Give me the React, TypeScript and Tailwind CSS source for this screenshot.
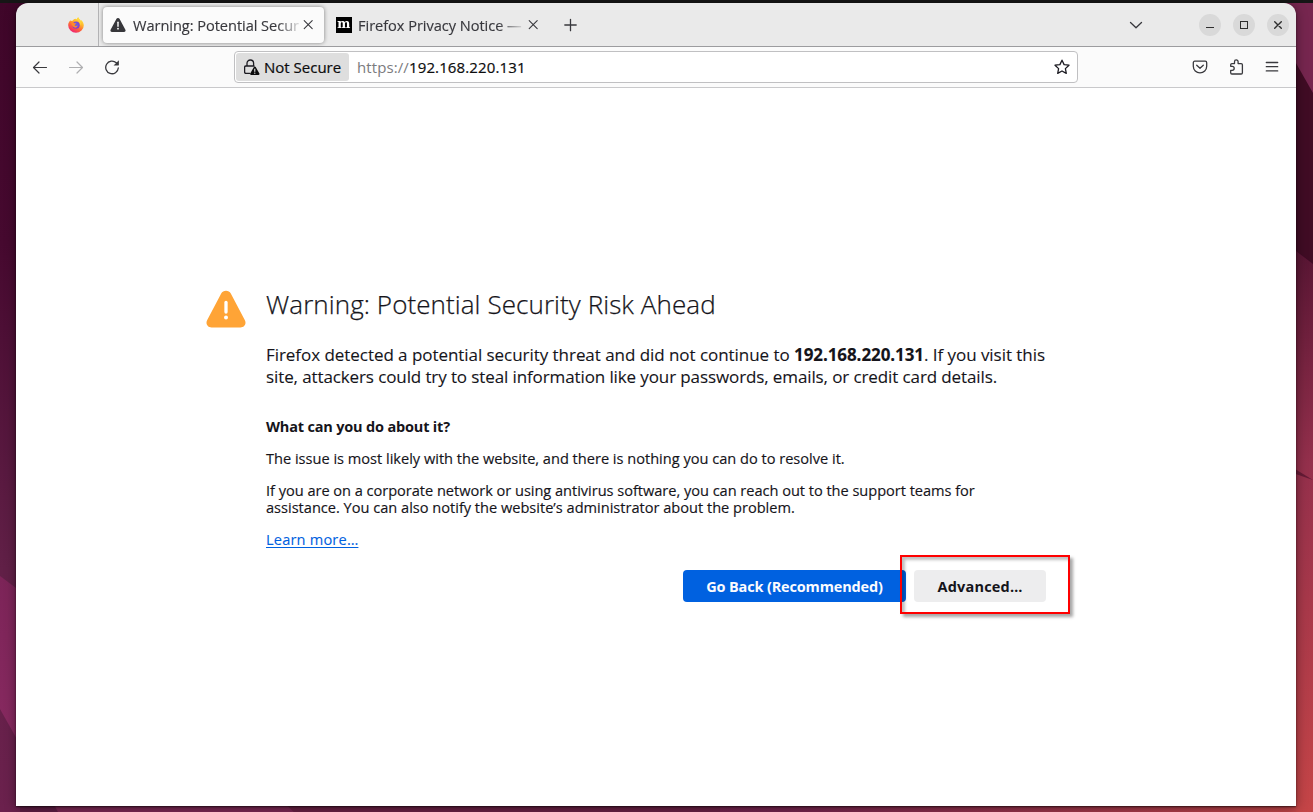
import type { ReactNode } from "react";

type IconProps = { className?: string };

function Wallpaper() {
  return (
    <svg className="absolute inset-0 h-full w-full" viewBox="0 0 1313 812" preserveAspectRatio="none">
      <defs>
        <linearGradient id="leftWall" x1="0" y1="0" x2="0" y2="1">
          <stop offset="0" stopColor="#3f0629" />
          <stop offset="0.3" stopColor="#46092f" />
          <stop offset="0.7" stopColor="#612047" />
          <stop offset="1" stopColor="#6b214d" />
        </linearGradient>
        <linearGradient id="facet" x1="0" y1="0" x2="0" y2="1">
          <stop offset="0" stopColor="#7c2458" />
          <stop offset="1" stopColor="#8a2b62" />
        </linearGradient>
        <linearGradient id="rightWall" x1="0" y1="0" x2="0" y2="1">
          <stop offset="0" stopColor="#521331" />
          <stop offset="0.4" stopColor="#94304c" />
          <stop offset="1" stopColor="#c54547" />
        </linearGradient>
        <linearGradient id="bottomWall" x1="0" y1="0" x2="1" y2="0">
          <stop offset="0" stopColor="#6b2149" />
          <stop offset="0.6" stopColor="#74244d" />
          <stop offset="1" stopColor="#c04447" />
        </linearGradient>
      </defs>
      <rect width="656" height="812" fill="url(#leftWall)" />
      <polygon points="0,576 40,606 40,780 0,709" fill="url(#facet)" />
      <rect x="656" width="657" height="250" fill="#76264f" />
      <polygon points="1260,0 1313,93 1313,264 1270,230" fill="#400c24" />
      <polygon points="1270,231 1313,264 1313,812 1270,812" fill="url(#rightWall)" />
      <polygon points="1290,466 1313,480 1290,472" fill="#661b36" />
      <rect y="795" x="20" width="1276" height="17" fill="url(#bottomWall)" />
      <polygon points="20,795 48,795 58,812 20,812" fill="#5e1d43" />
      <polygon points="58,812 50,795 276,795 294,812" fill="#7b2753" />
      <polygon points="294,812 276,795 720,795 720,812" fill="#65203f" fillOpacity=".7" />
    </svg>
  );
}

function FirefoxLogo() {
  return (
    <svg className="h-4 w-4" viewBox="0 0 16 16">
      <defs>
        <linearGradient id="fox" x1=".85" y1=".05" x2=".3" y2="1">
          <stop offset="0" stopColor="#fff14a" />
          <stop offset=".35" stopColor="#ffb52c" />
          <stop offset=".62" stopColor="#ff6a36" />
          <stop offset="1" stopColor="#ee1d76" />
        </linearGradient>
        <radialGradient id="globe" cx=".5" cy=".4" r=".6">
          <stop offset="0" stopColor="#5b68e8" />
          <stop offset="1" stopColor="#8c35cf" />
        </radialGradient>
      </defs>
      <path
        d="M2.2 3.2 3 4.1c.5-.3 1-.4 1.6-.4C5.5 2.5 6.4 2 7.2 1.8L9 2.3C9 1.4 9.7.5 10.3.2c.3 1.5 1.8 2 2.6 3.6l.4-.9c1.5 1.6 2.5 3.4 2.5 5.3A7.8 7.6 0 0 1 8 15.8 7.8 7.6 0 0 1 .2 8.2C.2 6.3 1 4.8 1.8 4z"
        fill="url(#fox)"
      />
      <circle cx="8.1" cy="8.2" r="3.6" fill="url(#globe)" />
      <path d="M3.3 6.1c1-.8 2-.6 3-.1.7.3 1.8.1 2 .5 0 .8-1.5.9-1.7 1.7.4 1 2.1.8 3.1.1-.2 1.9-1.7 2.6-3.2 2.3C4.7 10 3.5 8.3 3.3 6.1z" fill="#ff8a2b" />
      <path d="M8.6 2.3c1.6.7 3.7 2.7 3.5 6.1 1-1.4.8-3.5-.1-5L10.3.6C9.500 1 8.900 1.600 8.600 2.300z" fill="#ffd83b" />
    </svg>
  );
}

function TabWarning() {
  return (
    <svg className="h-4 w-4 shrink-0" viewBox="0 0 16 16">
      <path d="M8 .9c.7 0 1.200.3 1.500.9l5.900 10.900c.6 1.100-.1 2.200-1.400 2.200H2c-1.300 0-2-1.100-1.400-2.200L6.500 1.800c.3-.6.8-.9 1.500-.9z" fill="#37373b" />
      <path d="M8 5.300v4" stroke="#fff" strokeWidth="1.400" strokeLinecap="round" />
      <circle cx="8" cy="11.700" r=".9" fill="#fff" />
    </svg>
  );
}

function Line({ d, className = "", w = 1.3, size = "h-4 w-4" }: { d: string; w?: number; size?: string } & IconProps) {
  return (
    <svg
      className={`${size} shrink-0 ${className}`}
      viewBox="0 0 16 16"
      fill="none"
      stroke="currentColor"
      strokeWidth={w}
      strokeLinecap="round"
      strokeLinejoin="round"
    >
      <path d={d} />
    </svg>
  );
}

function LockWarning() {
  return (
    <svg className="h-4 w-4 shrink-0" viewBox="0 0 16 16">
      <path
        d="M3 7V4.300a3.300 3.300 0 0 1 6.600 0V7M5.700 14.400H1.900c-.8 0-1.300-.5-1.300-1.300V8.300c0-.8.5-1.300 1.300-1.300h8.200"
        fill="none"
        stroke="#1c1b22"
        strokeWidth="1.300"
        strokeLinecap="round"
      />
      <path d="M10.800 7.400c.4 0 .7.200.9.500l3.700 6.600c.4.700 0 1.400-.8 1.400H7c-.8 0-1.200-.7-.8-1.400l3.700-6.600c.2-.3.500-.5.900-.5z" fill="#0c0c0d" />
      <path d="M10.800 10.100v2.300" stroke="#fff" strokeWidth="1" strokeLinecap="round" />
      <circle cx="10.800" cy="14.200" r=".6" fill="#fff" />
    </svg>
  );
}

function Reload() {
  return (
    <svg className="h-4 w-4 text-[#39393d]" viewBox="0 0 16 16" fill="none">
      <path d="M14.300 9a6.300 6.300 0 1 1-2-5.200l1.200 1.200" stroke="currentColor" strokeWidth="1.300" strokeLinecap="round" />
      <path d="M14.900 1.300v4.800c0 .3-.2.500-.5.500H9.600z" fill="currentColor" />
    </svg>
  );
}

function AlertTriangle() {
  return (
    <svg className="mt-[2px] h-[38px] w-10 shrink-0" viewBox="0 0 40 38">
      <path d="M20 .7c2.100 0 3.800 1 4.800 2.800l14.100 26.800c1.800 3.500-.6 7.100-4.400 7.100H5.500c-3.800 0-6.200-3.600-4.400-7.100L15.200 3.500c1-1.800 2.700-2.800 4.800-2.800z" fill="#ffa436" />
      <path d="M20 12.500v9.500" stroke="#fff" strokeWidth="3.300" strokeLinecap="round" />
      <circle cx="20" cy="27.500" r="2" fill="#fff" />
    </svg>
  );
}

function WindowButton({ children }: { children: ReactNode }) {
  return (
    <div className="flex h-[22px] w-[22px] items-center justify-center rounded-full bg-[#d9d9d9] text-[#2e2e2e]">
      {children}
    </div>
  );
}

const CROSS = "M4.200 3.700l8 8M12.200 3.700l-8 8";

function TabStrip() {
  return (
    <header className="flex h-[44px] border-b border-[#9c9c9f] bg-[#eaeaea] text-[14.600px] leading-5 text-[#38383d]">
      <div className="flex w-[83px] justify-end border-r border-[#b3b3b5] pt-[14px] pr-[14px]">
        <FirefoxLogo />
      </div>
      <div className="mt-[4px] ml-[4px] flex h-[36px] w-[221px] items-center rounded-[4px] bg-[#fbfbfb] pl-[7px] shadow-[0_0_4px_rgba(0,0,0,0.45)]">
        <TabWarning />
        <span className="ml-[7px] w-[166px] overflow-hidden tracking-[-0.050px] whitespace-nowrap [-webkit-text-stroke:0.150px] [mask-image:linear-gradient(to_right,#000_144px,transparent_170px)]">
          Warning: Potential Security Risk Ahead
        </span>
        <Line d={CROSS} w={1.100} className="ml-[1px]" />
      </div>
      <div className="ml-[12px] flex h-[44px] items-center">
        <div className="flex h-4 w-4 items-center justify-center bg-black font-['DejaVu_Serif'] text-[13px] leading-4 font-bold text-white">
          <span className="-mt-[3px] inline-block scale-x-[0.950]">m</span>
        </div>
        <span className="ml-[6px] w-[167px] overflow-hidden tracking-[-0.040px] whitespace-nowrap [-webkit-text-stroke:0.150px] [mask-image:linear-gradient(to_right,#000_140px,transparent_168px)]">
          Firefox Privacy Notice — Mozilla
        </span>
        <Line d={CROSS} w={1.100} />
        <Line d="M7.500 2.300v11.400M1.800 8h11.400" w={1.300} className="ml-[22px]" />
      </div>
      <div className="mr-[7px] ml-auto flex h-[44px] items-center gap-3">
        <Line d="M2.500 5.500 8 10.700l5.500-5.200" w={1.300} className="mr-[43px]" />
        <WindowButton>
          <svg className="h-4 w-4" viewBox="0 0 16 16">
            <rect x="4" y="10" width="8" height="1" fill="currentColor" />
          </svg>
        </WindowButton>
        <WindowButton>
          <svg className="h-4 w-4" viewBox="0 0 16 16">
            <rect x="4.500" y="4.500" width="7" height="7" fill="none" stroke="currentColor" />
          </svg>
        </WindowButton>
        <WindowButton>
          <Line d="M4.700 4.700l6.600 6.600M11.300 4.700l-6.600 6.600" w={1.400} />
        </WindowButton>
      </div>
    </header>
  );
}

function Toolbar() {
  return (
    <nav className="flex h-[41px] items-center border-b border-[#c9c9cb] bg-[#fbfbfb] pl-4 text-[15px] text-[#39393d]">
      <div className="flex gap-5">
        <Line d="M14.500 8.500H1.500M7 3 1.500 8.500 7 14" w={1.200} />
        <Line d="M1.500 8.500h13M9 3l5.500 5.500L9 14" w={1.200} className="text-[#afafb1]" />
        <Reload />
      </div>
      <div className="ml-[114px] flex h-8 w-[844px] items-center rounded-[4px] border border-[#c0c0c2] bg-white pl-px">
        <div className="flex h-7 w-[113px] items-center rounded-[3px] bg-[#dedede] pl-2 text-[#0c0c0d]">
          <LockWarning />
          <span className="ml-[4px] whitespace-nowrap [-webkit-text-stroke:0.200px]">Not Secure</span>
        </div>
        <span className="ml-[8px] tracking-[0.100px] whitespace-nowrap text-[#7b7b7e]">
          https://<span className="tracking-[0.130px] text-[#0c0c0d] [-webkit-text-stroke:0.200px]">192.168.220.131</span>
        </span>
        <Line
          d="M8 1.200l2.100 4.400 4.900.6-3.600 3.400.9 4.800L8 12l-4.300 2.400.9-4.800L1 6.200l4.900-.6z"
          w={1.300}
          className="mr-[7px] ml-auto text-[#1c1b22]"
        />
      </div>
      <div className="mr-4 ml-auto flex gap-5">
        <Line d="M2.800 2.200h10.400c.9 0 1.500.6 1.500 1.500v3.500a6.700 6.700 0 0 1-13.400 0V3.700c0-.9.6-1.500 1.500-1.500zM4.700 6.300 8 9.300l3.300-3" w={1.300} />
        <Line d="M2.700 7.300V5.800c0-.7.500-1.200 1.200-1.200H6.500V2.700a1.800 1.800 0 0 1 3.600 0v1.900h3.100c.7 0 1.200.5 1.200 1.200v8c0 .7-.5 1.200-1.200 1.200H3.900c-.7 0-1.200-.5-1.200-1.200v-2.500h1.500a2 2 0 0 0 0-4z" w={1.300} />
        <Line d="M2.300 3.500h11.400M2.300 7.700h11.400M2.300 11.900h11.400" w={1.300} />
      </div>
    </nav>
  );
}

function WarningPage() {
  return (
    <main className="flex-1 bg-white pt-[200px] pl-[190px] text-[#15141a]">
      <div className="flex gap-5">
        <AlertTriangle />
        <section className="w-[780px]">
          <h1 className="text-[26px] leading-8 font-light tracking-[0.080px] [-webkit-text-stroke:0.250px]">
            Warning: Potential Security Risk Ahead
          </h1>
          <p className="mt-6 text-[17px] leading-[22px] whitespace-nowrap [-webkit-text-stroke:0.100px]">
            <span className="tracking-[-0.048px]">Firefox detected a potential security threat and did not continue to </span>
            <b className="tracking-[-0.080px]">192.168.220.131</b>
            <span className="tracking-[-0.050px]">. If you visit this</span>
            <br />
            <span className="tracking-[-0.109px]">
              site, attackers could try to steal information like your passwords, emails, or credit card details.
            </span>
          </p>
          <div className="mt-[30px] flex flex-col gap-[15px] text-[14.600px] leading-[17px] whitespace-nowrap">
            <h2 className="text-[14.500px] font-bold tracking-[-0.180px]">What can you do about it?</h2>
            <p className="tracking-[-0.010px] [-webkit-text-stroke:0.150px]">
              The issue is most likely with the website, and there is nothing you can do to resolve it.
            </p>
            <p className="[-webkit-text-stroke:0.150px]">
              <span className="tracking-[-0.033px]">
                If you are on a corporate network or using antivirus software, you can reach out to the support teams for
              </span>
              <br />
              <span className="tracking-[-0.010px]">
                assistance. You can also notify the website’s administrator about the problem.
              </span>
            </p>
            <a className="self-start tracking-[0.180px] text-[#0061e0] underline decoration-1 underline-offset-2 [-webkit-text-stroke:0.100px]">
              Learn more…
            </a>
          </div>
          <div className="mt-[22px] flex justify-end gap-2 text-[14.500px] font-bold">
            <button className="h-8 w-[223px] rounded-[4px] bg-[#0061e0] pt-[2px] tracking-[-0.160px] text-[#fbfbfe]">
              Go Back (Recommended)
            </button>
            <div className="relative">
              <button className="h-8 w-[132px] rounded-[4px] bg-[#ededee] pt-[2px] tracking-[0.180px]">Advanced…</button>
              <div className="absolute -top-[15px] -left-[14px] h-[59px] w-[170px] border-2 border-[#ff0000] shadow-[3px_3px_3px_rgba(0,0,0,0.35),inset_3px_3px_3px_rgba(0,0,0,0.25)]" />
            </div>
          </div>
        </section>
      </div>
    </main>
  );
}

export default function App() {
  return (
    <div className="relative h-[812px] w-[1313px] overflow-hidden bg-[#3f0629] font-['Open_Sans',sans-serif]">
      <Wallpaper />
      <div className="relative flex h-full flex-col">
        <div className="h-[3px] shrink-0 bg-[#161616]" />
        <div className="mx-4 flex h-[803px] w-[1280px] flex-col overflow-hidden rounded-t-[12px] shadow-[0_1px_2px_rgba(0,0,0,0.6),0_2px_12px_rgba(0,0,0,0.4)]">
          <TabStrip />
          <Toolbar />
          <WarningPage />
        </div>
      </div>
    </div>
  );
}
